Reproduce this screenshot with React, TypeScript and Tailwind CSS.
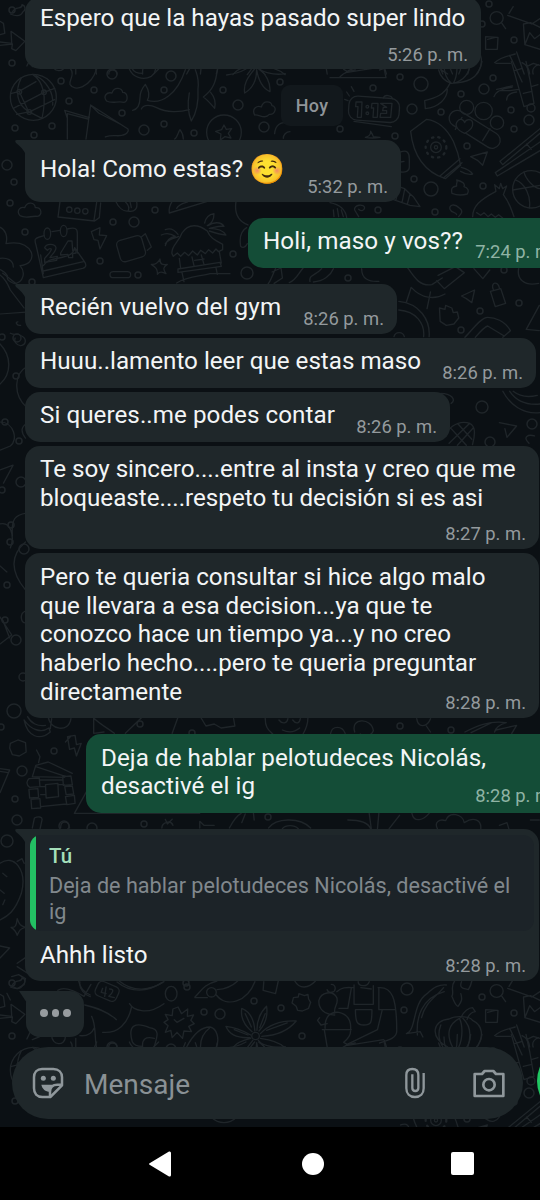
import type { ReactNode } from 'react';

type Dot = [number, number, number];

const dots: Dot[] = [
  [61, 81, 3], [69, 101, 3], [94, 90, 3], [112, 74, 5], [122, 113, 3], [144, 130, 5], [164, 90, 3], [164, 124, 3],
  [171, 76, 5], [223, 90, 3], [238, 105, 5], [280, 82, 3], [264, 127, 5], [194, 133, 3], [15, 128, 3], [34, 135, 3],
  [52, 126, 3], [340, 129, 3], [373, 88, 3], [400, 77, 3], [421, 84, 7], [412, 109, 5], [441, 112, 3], [461, 94, 3],
  [484, 89, 5], [493, 78, 3], [511, 110, 3], [529, 120, 5], [514, 129, 3], [467, 146, 3], [395, 136, 3], [414, 179, 3],
  [431, 189, 7], [483, 186, 3], [378, 210, 3], [435, 212, 3], [10, 203, 3], [7, 165, 5], [14, 182, 3], [155, 210, 3],
  [113, 222, 3], [134, 222, 5], [25, 232, 3], [100, 261, 3], [138, 275, 3], [233, 254, 3], [247, 273, 6], [32, 282, 3],
  [348, 278, 3], [504, 270, 3], [519, 303, 3], [480, 311, 3], [461, 330, 3], [482, 407, 6], [532, 424, 5], [490, 442, 5],
  [17, 338, 4], [2, 337, 3], [16, 376, 3], [5, 422, 3], [19, 441, 3], [2, 490, 3], [21, 482, 5], [11, 525, 3],
  [10, 542, 3], [24, 549, 5], [7, 585, 3], [5, 620, 3], [16, 640, 5], [23, 677, 4], [14, 711, 7], [1, 727, 3],
  [140, 724, 3], [400, 726, 3], [451, 730, 3], [192, 733, 3], [54, 751, 3], [22, 771, 5], [15, 799, 3], [17, 820, 5],
  [64, 826, 5], [92, 828, 5], [144, 824, 3], [268, 817, 3], [7, 841, 6], [12, 10, 3], [204, 39, 3], [220, 41, 5],
  [254, 28, 3], [281, 35, 3], [302, 63, 3], [404, 37, 3], [407, 16, 6], [482, 24, 3], [514, 40, 3], [12, 63, 3],
  [186, 10, 3], [187, 987, 3], [489, 4, 3], [531, 108, 4],
];

function PatternTile() {
  return (
    <g>
      {dots.map(([x, y, r], i) => (
        <circle key={i} cx={x} cy={y} r={r} />
      ))}
      <g transform="translate(0 65) scale(.3333)" strokeWidth="4">
        <circle cx="100" cy="97" r="69" />
        <path d="M40 130L132 82 164 70M32 86l24-6 52-30M50 148l40-8 74-36M64 38c-20 40-14 80 22 102l40 20M98 28c30 20 44 60 28 132M58 80l28 60M108 32c30 16 54 50 50 88" />
        <circle cx="58" cy="80" r="7" /><circle cx="132" cy="82" r="7" /><circle cx="88" cy="141" r="7" />
        <path d="M212 12c14 18-6 34-2 46 12 24 62 10 80-46M388 12c10 24 40 36 66 22l22-22M320 108c-12-14 0-28 16-24 8-22 30-14 32-2 16 0 18 26 4 30-18-6-34 6-52-4" />
        <path d="M398 136c18-4 22-18 22-38 0-18 6-28 16-40 10 16 14 34 6 48 44 14 90-20 114-92M424 132c8-16 30-12 46-4 30 16 70 14 98 6M568 84c-6 32-4 60 6 84 18-28 22-58 20-96M594 72c4-30-2-40-8-58M652 14c-4 36-12 60-42 82 12 8 22 20 34 34 4-18 0-34-12-48" />
        <path d="M680 30c30-4 44-10 58-18M764 12c-22 26-34 46-30 72 24-14 36-36 36-70 6 36 18 56 40 66 2-28-12-54-34-68 28 16 54 18 80 14" />
        <path d="M202 222V146l62 16M202 160l-8-24 74 22M258 222l14-102 112 72c4 8-6 16-14 18M272 120l24 24 70 36M316 216c26-10 40 2 58-8M524 222c8-4 10-20 16-28 8 10 10 18 10 28" />
        <circle cx="672" cy="202" r="52" />
        <path d="M672 180l7 13 16-2-10 14 8 14-18-4-14 10 2-18-16-8 18-5zM764 150c-10-20 8-30 20-24 6-22 30-18 32-4 18 4 8 28-8 26-14 16-30 0-44 2M824 206c2-26 20-36 34-32M850 220c0-10 8-20 20-20" />
      </g>
      <g transform="translate(330 60) scale(.3333)" strokeWidth="4">
        <path d="M0 53h168l-5-24M30 50c14-14 24-16 46-20M44 118l10 4M50 96l8 12M64 80l8 14" />
        <rect x="56" y="112" width="152" height="72" rx="26" transform="rotate(4 132 148)" />
        <path d="M160 114c4-12 24-8 28 2M72 184l112 16" />
        <path d="M78 126h18l-2 46H82l2-32h-7zM126 130h18l-2 42h-13l2-28h-7zM152 130h34l-4 42h-32l2-12h18v-8h-12l2-10h10z" />
        <circle cx="112" cy="140" r="4" /><circle cx="112" cy="160" r="4" />
        <path d="M326 30c6 24 20 34 38 40 40-2 84-10 92-66M342 12c0 30 8 46 22 58M382 4c-2 26 2 42-12 66 30-8 50-30 52-66M360 70c-18 36-44 44-76 52l2 24c40-4 66-30 66-58" />
        <path d="M492 110c4-14 24-24 54-28M500 88c12-2 34-8 48-10M530 120c0-14 14-22 30-24M510 92h30l26-4M544 4l38 136 30-10-12-70-12-56M590 20l20-10 20 6M604 80l20-6M580 100l26-6" />
        <rect x="348" y="184" width="172" height="48" rx="24" transform="rotate(32 434 208)" />
        <path d="M396 172l-20 36M480 206l-22 36" />
        <circle cx="410" cy="142" r="21" /><circle cx="461" cy="153" r="26" /><circle cx="501" cy="188" r="20" />
        <path d="M404 220c-24-10-32-26-20-38 8-8 18-2 20 6 4-12 22-12 24 0 2 14-12 26-24 32z" fill="#0b1014" />
        <path d="M242 214l48-36c30 4 60 26 80 66 16 36 20 60 22 72l-46 40c-60-20-96-68-104-142M330 348l60-52M340 354l56-46M394 322c14 4 26 8 34 20-16 4-26-2-36-8" />
        <circle cx="318" cy="262" r="16" /><circle cx="318" cy="262" r="5" />
        <circle cx="318" cy="262" r="31" strokeDasharray="4 15" strokeWidth="7" />
        <path d="M422 290l50-14-14 40-14-14z M366 400c-4-16 2-20 14-22-2-10 4-12 0-18 18 4 26 12 22 20 12 4 16 12 10 22-14 4-32 4-46-2M630 206L510 304l8 10 112-94M630 246L496 338l6 10 128-76M590 252l14 16" />
        <circle cx="604" cy="388" r="56" />
        <path d="M556 360c30 10 48 50 42 84M582 336c4 20 30 50 48 50M548 390l82-14" />
        <path d="M428 470c0-30 20-50 70-76l-4-20 14 12 4-16 6 16 12-8-10 26c20 26 22 40 32 66M440 458l12 8 10-8 12 12 10-8 12 10 10-8 12 10" />
        <path d="M212 276c20-8 26 4 26 20v26c0 12-12 16-26 14M212 306l10-2M190 392l16-12 18 6 14 14 12 10 20 30-30-4-30-10-28-10M206 380l-8 40M224 388l-8 40M240 402l-8 30M130 230c-2-6-4-10-8-16 0 14-8 16-16 18 20 4 32 2 44 0z M0 428c30 6 46 20 50 44M10 450l2 20M22 446l4 24M34 450l6 20" />
        <path d="M86 470l-12-20c-4-16 30-20 30-6-2 10-12 10-18 4M386 470c10-10 14-18 2-26-16-16-32-8-28 4s18 6 20 16" />
      </g>
      <g transform="translate(0 195) scale(.3333)" strokeWidth="4">
        <path d="M60 62c-12-14 0-28 14-24 8-20 30-16 32 0 20-2 22 24 6 26-20-2-34 8-52-2M180 20l-6 46 110 12 14-10 4-44M290 22l-8 54" />
        <circle cx="208" cy="44" r="8" /><circle cx="232" cy="47" r="8" /><circle cx="256" cy="49" r="8" />
        <path d="M348 20c8 18 22 30 36 28 6-10 0-20-8-28M384 48c20 4 30-6 26-28M390 20l4 18M516 20c-6 10-10 24-8 34l112-34M530 40c10-16 26-16 34-20" />
        <path d="M108 150c-6-18-2-20 10-24l14-4M156 110l24-4M202 102c22-6 30-2 30 12v60M108 150l22 98 118-28c14-4 10-14 4-22l-28-40c-4 20-18 26-34 28-30 8-44 4-60 26M130 228l120-28M122 180l8 56" />
        <ellipse cx="142" cy="116" rx="10" ry="17" /><ellipse cx="191" cy="108" rx="10" ry="17" />
        <path d="M134 158c4-12 30-14 34 0 0 12-14 22-18 30l22-4-2 12-36 6v-12c12-14 20-20 20-28-6-4-10 2-12 4zM182 174l22-36h12l2 28 10-2v10l-10 2v12h-12l-2-10-22 2z M274 110l26-12-2 22 22 2-20 40-6-26-12-2z" />
        <rect x="354" y="128" width="78" height="66" rx="14" transform="rotate(-16 393 160)" />
        <path d="M424 126l12-10 18 40-12 10M340 230h42q10 0 10 9t-10 9h-42q-10 0-10-9t10-9z M454 208c14 2 20-4 26-16 0 18 8 18 22 16-12 8-14 14-4 28-14-8-20-6-26 2 2-16-6-22-18-30z" />
        <path d="M516 176c-4-22 20-34 30-62 20-30 50-26 76-6 8 20 20 26 46 40v16l-12 6-8-8-10 12-12-10-10 12-14-10-10 14-14-12-12 14-12-10-12 12-10-10-12 10zM538 190l4 30M576 186l6 26M604 180l8 28M658 170l6 34M534 222l126-20 4 12-130 18zM546 232l6 28M648 218l4 20M530 264c30-20 70-20 100-28l60 0M584 196l28-4" />
        <path d="M484 120c16-8 30-4 42 4-18 2-26 12-30 28M496 146c14-18 30-16 40-22M496 104c14-6 26-2 38 14M614 84c4-18 14-26 28-28 0 16-4 28-20 36M624 92c16-12 40-12 48 2-18-2-30 4-44 6M628 100c20 0 40 4 50 20-20-2-38-8-50-12" />
        <path d="M-2 96c18 6 26 28 20 50 34-6 62-2 76 26 8 26-12 38-34 40 18 20 10 50-16 54-20-8-24-12-22-24-10-16-16-14-24-20M0 190c20-2 40 4 40 26M708 20c-6 40 10 60 36 70M740 98c-18 10-22 30-18 56 6 6 14 4 20-8" />
      </g>
      <g transform="translate(0 2) scale(.3444 .3333)" strokeWidth="4">
        <path d="M0 58l10 6 4 30-14 4M0 120l34 4-2-36 40 30-26 28-12-6 2-14-36 4M36 30c8-20 30-6 28-22 12 4 10 18 2 22-6 14-22 12-36 6M78 192l10-22 26 16-20 8M150 180c0 34 40 34 40 4M168 46c16-12 44-2 76 18l20-36M228 16c4 24 16 36 34 44" />
        <rect x="278" y="26" width="66" height="46" rx="14" transform="rotate(24 311 49)" />
        <path d="M298 40l-4 12 14 4M308 36l-4 28M318 42c18 0 6 14-2 22l16 4M346 18c40 34 90 30 130 2M246 90c32 8 66 18 92 44M376 86c10 18 50 38 100 0M382 96c-10 50-40 80-84 76M232 182c20 2 34-4 42-24M266 124c14 30 8 60 14 92M220 190v26M316 216c-2-16 22-16 24 0M384 200c-14-50 10-60 50-42 30 4 24 24 14 56M414 216c-2-24 8-32 34-26M384 200c4 10 12 14 30 14" />
        <ellipse cx="497" cy="56" rx="17" ry="22" />
        <path d="M517 96l10 20 18-14-1 22 18-4-8 16 10 10-16 8 8 16-22-2-4 22-16-18-14 16-4-22-16 6 8-20-12-10 12-8-8-16 20 4 2-20zM506 134l8 8 20-12M566 66c18-18 26-38 64-48M566 68h36M628 60c30 40 90 20 112-40M630 44c30-2 48-14 60-26M542 216c20-40 40-60 68-60 20 4 28 36 18 60M582 216c0-24 10-44 26-56" />
        <circle cx="614" cy="52" r="14" /><circle cx="742" cy="183" r="11" />
        <path d="M732 170c-24-20-34-44-30-70 24 10 36 36 38 68M746 166c0-32 10-54 28-72 4 28-4 54-22 74M756 176c24-26 56-40 104-38-22 28-60 44-100 46M728 180c-30-18-50-24-72-26 10 26 36 36 70 34M728 190c-26 6-42 14-52 28M756 190c28 4 54 10 72 28M734 196l-16 22M750 196l20 22M712 116l18 40M770 116l-16 42M774 166l60-22M680 164l40 16" />
        <path d="M766 20l-2 26 36 10 8-38M852 68l14-2 2-10 16 6 10-4 2 14 6 10-6 18-18 8-14-2-4-12-12-10z M856 18c14 26 40 22 60 0M972 120c-30-2-48-18-46-44 6-24 40-32 52-8 6 20-10 26-6 46M944 160c-2-40 20-50 40-48 26 6 36 26 34 52M936 164h84M942 166l8 50M1018 168c0 10-8 24-20 34l10 6 88-44 14-60M1004 212l110-18M978 50c16-16 34-12 50-12M1028 30v58h56V32M1032 104h48c0 40-2 46-24 46-20 0-24-10-24-46M984 100h26l10-60M1098 38c40-4 54 30 54 130 0 20-20 26-50 36M1100 40v64h48M1040 20c0 14 26 18 32 0M1048 38l30 4M1116 196l6 20" />
        <path d="M950 44a12 12 0 1 0 12-16M928 128l-6 8 10 14 18-4" />
        <path d="M1180 176c30-10 16-90 60-120 20-20 34-28 56-26M1212 180c-4-50 10-110 78-130M1224 128c10-46 40-60 64-90M1180 176l40-6 8 16M1320 18c-14 20 0 34-8 46 8 18 10 28 18 30 8-12 14-18 8-38M1340 20c-8 20 6 20 20 24 6-10 8-16 10-26" />
        <path d="M1300 216c-54-30-44-80 4-84 20-12 60-8 68 4 30 14 34 50 12 80M1314 216c-20-40-10-70 20-86 10 20 10 60-2 86M1344 130c20 20 26 50 14 86M1280 150c-10 26-4 50 6 66M1338 128c8-20 24-30 34-30l8 12c-14 2-20 10-24 24" />
        <circle cx="1442" cy="48" r="19" />
        <path d="M1456 62l12 18M1410 104l36 2-2 36-34 0z M1416 112l22-6M1478 34l12-20M1474 40l70 26 24-16M1520 66l20-4 28 14M1520 68l4 60 44 14M1524 128l14-36 14 18 16-12M1436 182c20-18 40-20 60-26M1440 184l42 0M1480 160l36 80M1500 150l22 66M1494 206l20-6M1516 182c12 6 20 16 22 34M1548 216c-4-14 4-24 16-28" />
      </g>
      <g transform="translate(0 200) scale(.3444 .3333)" strokeWidth="4">
        <path d="M800 206c-10 20-10 30-24 50M790 216l26-12 4 30-24 16M840 248c20-8 24-24 40-44M900 244c-4-20 18-18 34-38M910 246c30-2 50-20 58-40M1050 206c0 30 20 40 50 38M1184 204c20 30 36 56 70 50l30-20M1272 226l50-26 26 18-58 48-22-24M1180 306l14-44c30 34 68 38 98 20M1250 276l-10 50M1376 206l26 30 20-26M1506 206c-6 30 16 54 58 44M1340 288l38-18-8 38-16-12zM1424 274l30-8 14 44-30 10zM1432 268c-8-22 14-26 18-4M1276 324l16 4 2-12 18 8 4 14 12-2 4 18-14 18-22 4-18-12zM1566 316l-38 72 38 4" />
        <path d="M1158 304c60 6 92 56 88 106M1158 330c50 4 76 40 72 80M1144 410c4-16 26-16 30 0M1350 412c20-20 46-60 66-60s50 10 66 40l-22 20M1380 412c10-12 28-32 36-34l48 30M1280 580c30 0 46 20 30 30M1460 574c20 40 60 70 108 64M1480 574c20 30 50 42 88 38M1490 574c20 16 40 20 70 12M1296 708c0-20 30-46 60-40 20 4 28 20 16 66M1310 686l44 50M1330 672l40 46M1304 730l60-60M1328 736l46-52M1450 668l50 10-28 34-6-26M1536 730c-20-20-2-28 16-22" />
        <path d="M0 250c12 10 20 22 30 50l40 60M0 380l76-6M8 244c20 16 30 30 50 44M52 406c-10 0-2 14 8 12M30 444c20 10 20-4 30 8 20 10 16 30 0 34-14-4-20-14-16-26M0 480c34 40 34 100 0 134M78 556c-34 20-44 90 0 136M0 740c40 0 54 60 30 80L0 834M80 744c-20 10-20 30-6 50M0 900l38-16-28 60M0 1080c30-10 44 40 30 80M36 1120c-4-60 10-70 40-76M0 1220l20 20M74 1140c-40 40-50 90 0 160M0 1390l34 60-34 30M8 1400l20 60M74 1370c-20 10-12 40 0 40" transform="scale(1 .9)" />
      </g>
      <g transform="translate(0 700) scale(.3444 .3333)" strokeWidth="4">
        <path d="M70 60c20 30 50 40 72 24l4 12c-30 26-66 16-76-36M80 50c10 20 30 30 52 26M140 50c4 40 60 50 66 6M150 56l-4 30M206 108l-16 18M196 110l22-4 4 28 14-4-14 38-6-24-14 4zM30 130l22-10 22 8 2 28-20 12-20-4-8-20z" />
        <path d="M272 54v46l30-4M272 54c20 20 40 30 60 46M364 100l46-46M516 54l-16 46M584 54l14 24 24-6 20 12 40-6-4-24M770 54c0 30 10 36 22 48M894 54c0 20-4 30-14 48M810 60c10 14 24 10 26-4M850 60c10 14 20 10 22-4M820 90c20 10 36 6 50-6M960 100c4-24 34-24 42 0M1030 96c-14-44 50-44 54-4-6 16-28 22-38 10M1210 56c4 30 30 26 40 0M1238 78l12 18M1350 96c30-16 70-36 120-28-20 6-30 14-34 28M1368 98l60-30M1440 90l60-14-14 24" />
        <path d="M106 150l10 20-4 18M94 230l10-34 36-10 70 34M104 200l88 30M94 230l94 2M84 236l30-2 2 26-30 2c-10-8-10-18-2-26zM84 268l26-2 2 26-26 2zM90 298l26-2 2 28-26 2zM182 230l24-2 4 26-26 2zM188 260l22-2 4 24-22 2zM190 290l26-4 2 24-24 4zM132 254l36-4 2 40-36 4zM116 240h66M118 260h14M170 254h16M118 284h14M118 320l74-8M0 206l28 4-28 68M0 214l24 4M216 340l40-74M216 340h364l-4-8M94 384l6-30c10-6 24-4 22 6l-6 28M176 384c0-24 24-24 26 0M470 384c0-16 26-26 32-8M480 358l6 14 14-14M580 384v-20l12 12h30M666 384c10-20 20-36 34-44M702 368l10-26M780 384c20-30 90-34 122 0M820 386c10-12 34-12 46 0M736 340l2 20M1010 360c40 0 60 10 66 26M1072 340l6 46M1100 340l-4 46M1160 346l-30 40M1196 340c6 30 34 20 50 0M1270 386c-10-20 6-30 24-24 10-30 50-20 54 6 30-20 50-6 48 18M1450 376l22-8 6 20M1540 360h26" />
        <path d="M0 490c40-30 80 20 62 90-20 60-44 70-62 80M8 520l12 10M0 570l12 10M14 600l-6 14M50 484l14-8 6 14M32 682c14 2 16-8 18-26 6 18 10 22 24 26-16 4-18 10-24 24-4-14-8-18-18-24M0 738l28 6-28 30M50 790l28-20M50 800l30 20M34 830l20-6 20 12-4 18-20 12-18-8M20 880l10 20M232 846c-4 20 16 40 30 44M340 846c40 34 90 30 130 2" />
      </g>
    </g>
  );
}

function Wallpaper() {
  return (
    <svg className="absolute inset-0" width="540" height="1127" fill="none" stroke="#1f2529" strokeWidth="1.5" strokeLinejoin="round" strokeLinecap="round" aria-hidden="true">
      <PatternTile />
      <g transform="translate(0 973)"><PatternTile /></g>
    </svg>
  );
}

function Tail() {
  return (
    <svg className="absolute -left-[10px] top-0" width="11" height="15" aria-hidden="true">
      <path d="M2 0H11V15C9 10 5 6 1 3Q-1 0 2 0Z" fill="#1f272a" />
    </svg>
  );
}

interface BubbleProps {
  box: string;
  time: string;
  sent?: boolean;
  tail?: boolean;
  quote?: ReactNode;
  textPad?: string;
  timePad?: string;
  children: ReactNode;
}

function Bubble({ box, time, sent, tail, quote, textPad = 'pt-[9px]', timePad = 'pr-[13px] pb-[5px]', children }: BubbleProps) {
  return (
    <div className={`relative flex shrink-0 flex-col rounded-[15px] ${sent ? 'bg-[#144d37]' : 'bg-[#1f272a]'} ${tail ? 'rounded-tl-none' : ''} ${box}`}>
      {tail && <Tail />}
      {quote}
      <div className="grid grow">
        <p className={`pl-[15px] text-[24.2px] leading-[28.7px] text-[#f3f5f6] [grid-area:1/1] ${textPad}`}>{children}</p>
        <span className={`self-end justify-self-end text-[18.4px] leading-[20px] [grid-area:1/1] ${sent ? 'text-[#8fb3a4]' : 'text-[#949a9d]'} ${timePad}`}>{time}</span>
      </div>
    </div>
  );
}

function StickerIcon() {
  return (
    <svg width="32" height="32" viewBox="0 0 96 96" fill="none" stroke="#8f979b" strokeWidth="7.5" strokeLinejoin="round">
      <path d="M30 6H64C80 6 90 16 90 31V55L55 90H31C15 90 6 80 6 64V31C6 16 15 6 30 6Z" />
      <path d="M90 53H76C62 53 54 62 54 74V90" />
      <circle cx="34" cy="34" r="7.5" fill="#8f979b" stroke="none" /><circle cx="64" cy="34" r="7.5" fill="#8f979b" stroke="none" />
      <path d="M28 53H70C60 56 56 64 54 74C40 74 31 66 28 53Z" fill="#8f979b" stroke="none" />
    </svg>
  );
}

function ClipIcon() {
  return (
    <svg width="22" height="32" viewBox="0 0 66 96" fill="none" stroke="#8f979b" strokeWidth="7">
      <path d="M59 18V64C59 80 49 90 33 90S7 80 7 64V24C7 13 14 6 25 6S43 13 43 24V63C43 69 40 72 34 72S25 69 25 63V22" />
    </svg>
  );
}

function CameraIcon() {
  return (
    <svg width="32" height="29" viewBox="0 0 96 87" fill="none" stroke="#8f979b" strokeWidth="8" strokeLinejoin="round">
      <path d="M5 15H27L35 6H61L69 15H91V81H5Z" />
      <circle cx="48" cy="47" r="17" />
    </svg>
  );
}

export default function App() {
  return (
    <div className="relative flex h-[1200px] w-[540px] flex-col overflow-hidden bg-[#0b1014] font-['Roboto',sans-serif] whitespace-nowrap">
      <Wallpaper />
      <main className="relative flex h-[1047px] flex-col items-start pl-[25px]">
        <Bubble box="-mt-[3px] h-[72px] w-[456px]" time="5:26 p. m." textPad="pt-[7px]" timePad="pr-[13px] pb-[4px]">
          Espero que la hayas pasado super lindo
        </Bubble>
        <div className="mt-[16px] ml-[256px] flex h-[41px] w-[62px] shrink-0 items-center justify-center rounded-[9px] bg-[#12181c] text-[18px] font-medium tracking-[0.3px] text-[#8f9599]">Hoy</div>
        <Bubble box="mt-[14px] h-[62px] w-[376px]" time="5:32 p. m." tail textPad="pt-[15px]">
          Hola! Como estas? <span className="-mt-px ml-0 inline-block h-[28px] align-top text-[29px] leading-[31px]">☺️</span>
        </Bubble>
        <Bubble box="mt-[16px] ml-[223px] h-[50px] w-[340px]" time="7:24 p. m." sent timePad="pr-[32px] pb-[6px]">
          <span className="tracking-[0.1px]">Holi, maso y vos??</span>
        </Bubble>
        <Bubble box="mt-[16px] h-[50px] w-[372px]" time="8:26 p. m." tail>
          <span className="tracking-[0.15px]">Recién vuelvo del gym</span>
        </Bubble>
        <Bubble box="mt-[4px] h-[50px] w-[511px]" time="8:26 p. m.">Huuu..lamento leer que estas maso</Bubble>
        <Bubble box="mt-[4px] h-[50px] w-[425px]" time="8:26 p. m.">
          <span className="tracking-[0.05px]">Si queres..me podes contar</span>
        </Bubble>
        <Bubble box="mt-[4px] h-[103px] w-[514px]" time="8:27 p. m.">
          Te soy sincero....entre al insta y creo que me<br />bloqueaste....respeto tu decisión si es asi
        </Bubble>
        <Bubble box="mt-[4px] h-[165px] w-[514px]" time="8:28 p. m." textPad="pt-[10px]">
          <span className="tracking-[0.04px]">Pero te queria consultar si hice algo malo</span><br />que llevara a esa decision...ya que te<br />conozco hace un tiempo ya...y no creo<br />haberlo hecho....pero te queria preguntar<br />directamente
        </Bubble>
        <Bubble box="mt-[16px] ml-[61px] h-[79px] w-[502px]" time="8:28 p. m." sent textPad="pt-[9.5px]" timePad="pr-[32px] pb-[7px]">
          <span className="tracking-[0.06px]">Deja de hablar pelotudeces Nicolás,<br />desactivé el ig</span>
        </Bubble>
        <Bubble
          box="mt-[16px] h-[152px] w-[514px]"
          time="8:28 p. m."
          tail
          textPad="pt-[10px]"
          quote={
            <div className="mx-[5px] mt-[6px] flex h-[96px] overflow-hidden rounded-[11px] bg-[#1c2328]">
              <div className="my-px w-[6px] shrink-0 rounded-l-full bg-[#23c063]" />
              <div className="pt-[9px] pl-[13px]">
                <div className="text-[20.5px] leading-[24px] font-medium text-[#a5dfba]">Tú</div>
                <div className="mt-[5px] text-[21.6px] leading-[25.5px] text-[#81888d]">Deja de hablar pelotudeces Nicolás, desactivé el<br />ig</div>
              </div>
            </div>
          }
        >
          Ahhh listo
        </Bubble>
        <div className="relative mt-[10px] ml-[1px] flex h-[46px] w-[58px] shrink-0 items-center gap-[4px] rounded-[14px] rounded-tl-none bg-[#1f272a] pb-[2px] pl-[14px]">
          <svg className="absolute -left-[7px] top-0" width="8" height="12" aria-hidden="true"><path d="M0 0H8V12Z" fill="#1f272a" /></svg>
          <i className="size-[7.5px] rounded-full bg-[#979c9f]" />
          <i className="size-[7.5px] rounded-full bg-[#979c9f]" />
          <i className="size-[7.5px] rounded-full bg-[#979c9f]" />
        </div>
      </main>
      <div className="relative flex h-[80px] shrink-0 items-start pl-[12px]">
        <div className="flex h-[72px] w-[511px] shrink-0 items-center rounded-full bg-[#1f272a] pl-[20px]">
          <StickerIcon />
          <span className="w-[340px] shrink-0 pt-[3px] pl-[20px] text-[28px] text-[#8a9195]">Mensaje</span>
          <div className="shrink-0"><ClipIcon /></div>
          <div className="shrink-0 pl-[47px]"><CameraIcon /></div>
        </div>
        <div className="mt-[-2px] ml-[14px] size-[72px] shrink-0 rounded-full bg-[#20c762]" />
      </div>
      <nav className="relative flex h-[73px] shrink-0 items-center bg-black pl-[149px]">
        <svg width="22" height="26" viewBox="0 0 22 26"><path d="M1 12Q-1 13 1 14L20 25.500Q22 26 22 24V2Q22 0 20 .5Z" fill="#fff" /></svg>
        <div className="ml-[131px] size-[22px] rounded-full bg-white" />
        <div className="ml-[127px] size-[23px] rounded-[2px] bg-white" />
      </nav>
    </div>
  );
}
